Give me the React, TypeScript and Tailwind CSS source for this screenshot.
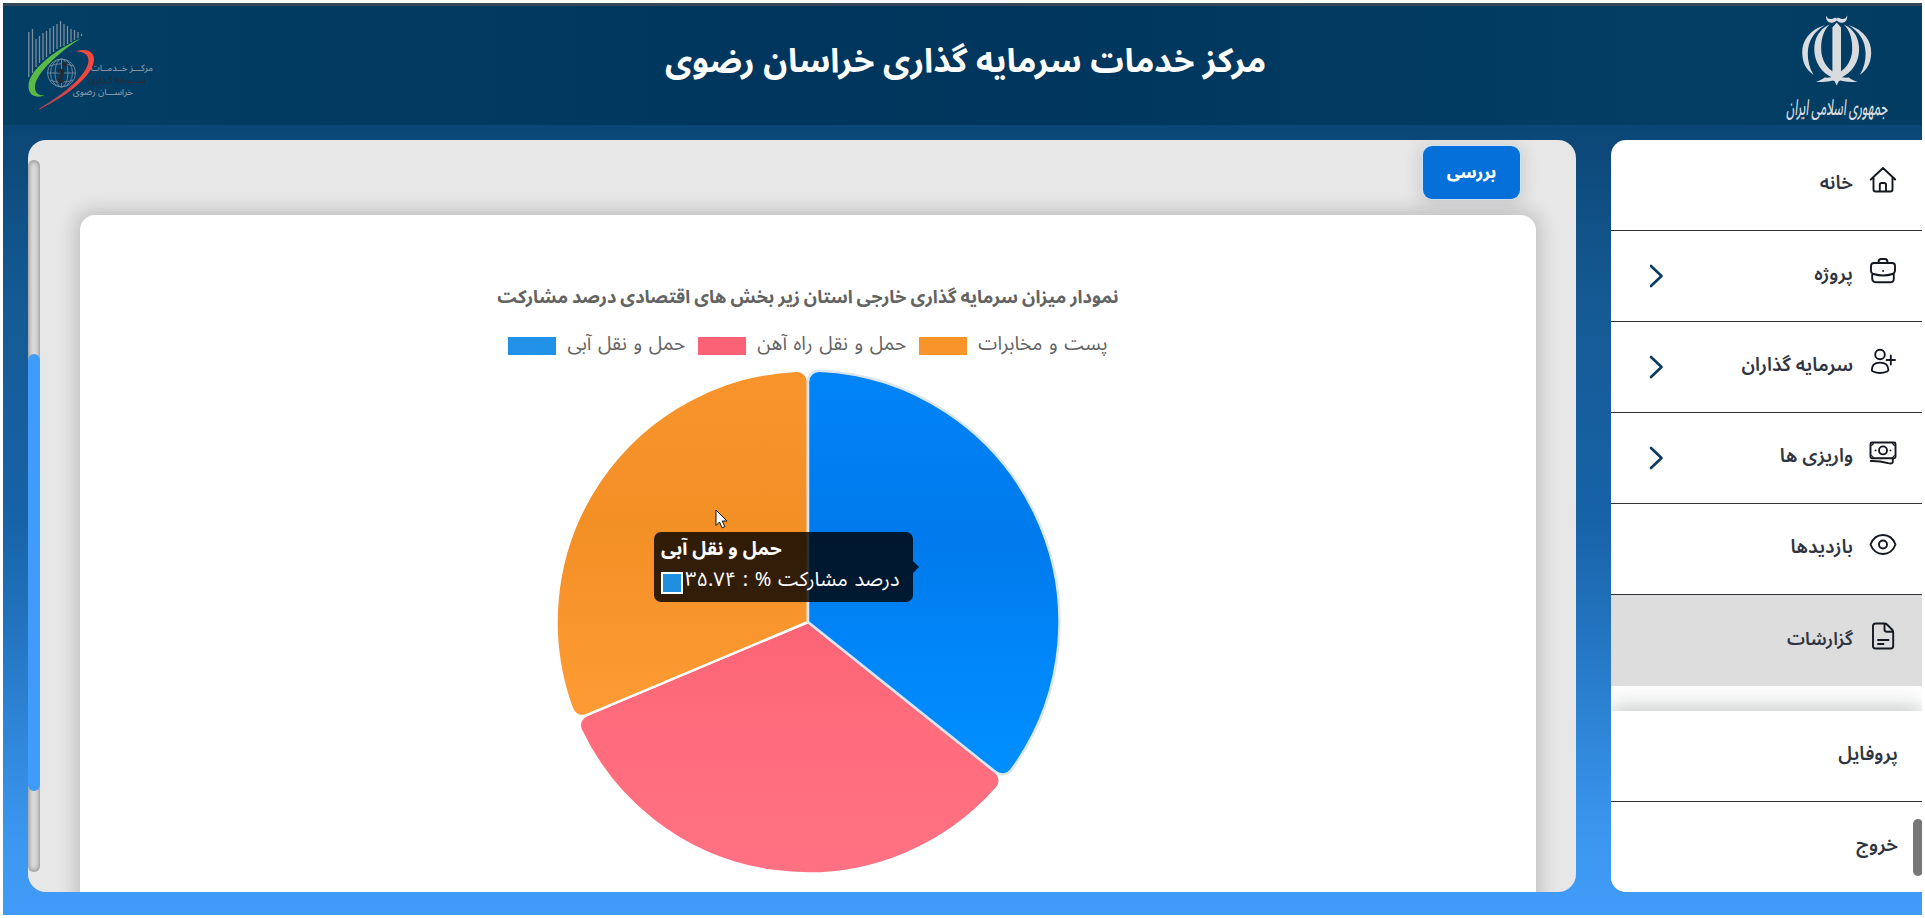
import type { ReactNode } from "react";

const CX = 260;
const CY = 260;
const R = 251.5;
const CORNER = 11;

function polar(r: number, deg: number): [number, number] {
  const a = (deg * Math.PI) / 180;
  return [CX + r * Math.sin(a), CY - r * Math.cos(a)];
}

/** Pie slice with rounded outer corners; angles run clockwise from the top. */
function slicePath(start: number, end: number) {
  const inset = (Math.asin(CORNER / (R - CORNER)) * 180) / Math.PI;
  const side = Math.sqrt((R - CORNER) ** 2 - CORNER ** 2);
  const p = (pt: [number, number]) => pt.map((n) => n.toFixed(2)).join(" ");
  return [
    `M${CX} ${CY}`,
    `L${p(polar(side, start))}`,
    `A${CORNER} ${CORNER} 0 0 1 ${p(polar(R, start + inset))}`,
    `A${R} ${R} 0 ${end - start - 2 * inset > 180 ? 1 : 0} 1 ${p(polar(R, end - inset))}`,
    `A${CORNER} ${CORNER} 0 0 1 ${p(polar(side, end))}`,
    "Z",
  ].join(" ");
}

function PieChart() {
  return (
    <svg width="520" height="520" viewBox="0 0 520 520" className="block">
      <defs>
        <linearGradient id="pieBlue" x1="0" y1="0" x2="0" y2="1">
          <stop offset="0" stopColor="#0084f8" />
          <stop offset="0.42" stopColor="#007aec" />
          <stop offset="0.75" stopColor="#0088fb" />
          <stop offset="1" stopColor="#008fff" />
        </linearGradient>
        <linearGradient id="pieOrange" x1="0" y1="0" x2="0" y2="1">
          <stop offset="0" stopColor="#f9942d" />
          <stop offset="0.45" stopColor="#f28f25" />
          <stop offset="1" stopColor="#ff9b34" />
        </linearGradient>
        <linearGradient id="piePink" x1="0" y1="0" x2="0" y2="1">
          <stop offset="0" stopColor="#fb6474" />
          <stop offset="0.4" stopColor="#ff6c7c" />
          <stop offset="1" stopColor="#ff7183" />
        </linearGradient>
      </defs>
      <path d={slicePath(128.66, 247.2)} fill="url(#piePink)" stroke="#fff" strokeWidth="2.500" />
      <path d={slicePath(247.2, 360)} fill="url(#pieOrange)" stroke="#fff" strokeWidth="2.500" />
      <path d={slicePath(0, 128.66)} fill="url(#pieBlue)" stroke="#dde6ee" strokeWidth="2.500" />
    </svg>
  );
}

function Emblem() {
  return (
    <svg width="72" height="71" viewBox="0 0 72 71" fill="#d9dcdf" className="block">
      <path d="M25 0.5C26 3.5 28.5 4.6 31.5 3.8C33.5 3.2 34.6 2 35.6 3.8C36.6 2 38 3.2 40 3.8C43 4.6 45 3.5 46.2 0.5C46.6 4.6 44.5 7.6 41 7.8C38.6 7.9 36.8 6.8 35.7 5.6C34.5 6.8 32.7 7.9 30.4 7.8C26.8 7.6 24.6 4.6 25 0.5Z" />
      <path d="M35.7 7.4L40 12.6L40 56C40 60 38.6 62.5 40.6 64.2L37.6 66.4L35.7 70.4L33.8 66.4L30.8 64.2C32.8 62.5 31.4 60 31.4 56L31.4 12.6Z" />
      <path d="M24 10C8 15 1 26 1.2 38C1.4 48.500 6 55.500 12.500 59.800C8.500 53 6.600 46 6.800 38C7.100 26 12.500 17 24 10Z" />
      <path d="M47.400 10C63.400 15 70.400 26 70.200 38C70 48.500 65.400 55.500 58.900 59.800C62.900 53 64.800 46 64.600 38C64.300 26 58.900 17 47.400 10Z" />
      <path d="M28.500 9.500C18 14 13 24 13.300 35C13.700 48 20.500 57.500 32 63L34 58C25.500 53 20.600 45 20.200 35C19.900 25 22 16 28.500 9.500Z" />
      <path d="M42.900 9.500C53.400 14 58.400 24 58.100 35C57.700 48 50.900 57.500 39.400 63L37.400 58C45.900 53 50.800 45 51.200 35C51.500 25 49.400 16 42.900 9.500Z" />
      <path d="M15 66.500C20 65.800 22 63.600 23.500 62.600C27.500 63 31 62.400 33 60.500L38.400 60.500C40.400 62.400 43.900 63 47.900 62.600C49.400 63.600 51.400 65.800 56.400 66.500C50 67.600 43.500 66.800 39.500 65.600L31.900 65.600C27.900 66.800 21.400 67.600 15 66.500Z" />
    </svg>
  );
}

const BARS: [number, number, number][] = [
  [0.8, 12, 57], [4.5, 9, 53], [8, 19, 47], [11.500, 16, 43], [15, 13, 40], [18.500, 11, 37], [22, 8, 34], [25.500, 6, 32],
  [29, 4, 29], [32.500, 1, 27], [36, 4, 26], [39.500, 6, 24], [43, 9, 22], [46.500, 10, 20], [50, 12, 18], [53.500, 14, 16],
];

function CenterLogo() {
  return (
    <svg width="72" height="92" viewBox="0 0 72 92" fill="none" className="block shrink-0">
      {BARS.map(([x, a, b]) => (
        <path key={x} d={`M${x} ${a}V${b}`} stroke="#7d8e9c" strokeWidth="1.300" />
      ))}
      <g stroke="#7189a0" strokeWidth="0.9">
        <circle cx="33.500" cy="53" r="14" />
        <ellipse cx="33.500" cy="53" rx="6.500" ry="14" />
        <ellipse cx="33.500" cy="53" rx="11" ry="14" />
        <path d="M33.500 39V67M19.500 53H47.500M21.500 46Q33.500 41.500 45.500 46M21.500 60Q33.500 64.500 45.500 60" />
      </g>
      <path d="M29.500 51.500C33 49.800 35 50.500 34.200 53L31.800 60C31.500 61.800 33 61.800 35 60.500" stroke="#252a33" strokeWidth="3.600" />
      <circle cx="36.500" cy="44.500" r="2.600" fill="#252a33" />
      <path d="M53.500 18C27 30 0 50 0.500 67C0.800 75.500 8 78.500 17 75.500C10.500 75.800 6.500 72.500 7 66.500C8 53 31 32 53.500 18Z" fill="#5ab947" />
      <path d="M47.500 31.500C56 28.500 66 30 66 39.500C65.500 55 41 75 11.500 89C38 73.500 59.500 54 60.500 41C60.800 33.500 54.500 31.500 47.500 31.500Z" fill="#f4483f" />
      <path d="M11.500 89C25 81 37 73 45.500 64.500" stroke="#b14652" strokeWidth="1.200" />
    </svg>
  );
}

function Icon({ children }: { children: ReactNode }) {
  return (
    <svg
      width="28" height="28" viewBox="0 0 28 28" fill="none" stroke="#141821" strokeWidth="1.900"
      strokeLinecap="round" strokeLinejoin="round" className="block shrink-0"
    >
      {children}
    </svg>
  );
}

const icons = {
  home: (
    <Icon>
      <path d="M1.800 13.500L14 2L26.200 13.500M4.500 11.500V23.500Q4.500 25.500 6.500 25.500H21.500Q23.500 25.500 23.500 23.500V11.500M10.800 25V18.800Q10.800 17 12.600 17H15.200Q17 17 17 18.800V25" />
    </Icon>
  ),
  briefcase: (
    <Icon>
      <path d="M5 6H23Q26 6.200 26 9V14Q25.500 16.500 23.500 17Q14 20 4.500 17Q2.300 16.500 2 14V9Q2 6.200 5 6ZM3.200 17.500V22Q3.500 25.300 7 25.300H21Q24.700 25.300 24.800 22V17.500M9.500 5.500Q9.500 2 12 2H16Q18.500 2 18.500 5.500" />
      <circle cx="14" cy="14" r="0.500" strokeWidth="1" />
    </Icon>
  ),
  userPlus: (
    <Icon>
      <circle cx="11" cy="6.500" r="4.800" />
      <path d="M2.800 22Q2.800 14.600 11 14.600T19.400 22Q19.300 23 18 23.500Q11 26.500 4 23.500Q2.800 23 2.800 22ZM21.800 7.500V16.500M17.600 12H26" />
    </Icon>
  ),
  money: (
    <Icon>
      <rect x="1.500" y="3.500" width="25" height="15.800" rx="1.500" />
      <circle cx="14" cy="11.400" r="4" />
      <path d="M2 6.500Q4 6 4.500 4M26 6.500Q24 6 23.500 4M2 16.500Q4 17 4.500 19M26 16.500Q24 17 23.500 19" strokeWidth="1.100" />
      <path d="M6.500 11.400H6.600M21.400 11.400H21.500M1.800 22Q11 21.800 19 24.200Q23.600 25.300 23.800 23V20" />
    </Icon>
  ),
  eye: (
    <Icon>
      <path d="M1.500 14.500C4 8 8.500 5 14 5S24 8 26.500 14.500C24 21 19.500 24 14 24S4 21 1.500 14.500Z" />
      <circle cx="14" cy="14.500" r="4" />
    </Icon>
  ),
  report: (
    <Icon>
      <path d="M6.500 1.500H15.500Q17 1.500 18 2.500L23.500 8Q24.200 9 24.200 10.500V24Q24.200 26.500 21.800 26.500H6.500Q4 26.500 4 24V4Q4 1.500 6.500 1.500ZM15.500 2V7.500Q15.500 9.700 17.700 9.700H23.500M9 18H19.500M9 22H14.500" />
    </Icon>
  ),
};

interface Item {
  label: string;
  icon: ReactNode;
  sub?: boolean;
  active?: boolean;
}

const items: Item[] = [
  { label: "خانه", icon: icons.home },
  { label: "پروژه", icon: icons.briefcase, sub: true },
  { label: "سرمایه گذاران", icon: icons.userPlus, sub: true },
  { label: "واریزی ها", icon: icons.money, sub: true },
  { label: "بازدیدها", icon: icons.eye },
  { label: "گزارشات", icon: icons.report, active: true },
];

function Sidebar() {
  return (
    <aside className="relative flex h-[752px] w-[311px] shrink-0 flex-col overflow-hidden rounded-l-[15px] bg-white text-[19px] font-semibold text-[#2f3540]">
      {items.map((it) => (
        <div
          key={it.label}
          className={
            it.active
              ? "flex h-[91px] shrink-0 items-center bg-[#dddddd] pr-[25px] pl-[37px] text-[18px]"
              : "flex h-[91px] shrink-0 items-center border-b border-[#2f3338] pr-[25px] pl-[37px]"
          }
        >
          <span className="-mt-[10px]">{it.icon}</span>
          <span className="-mt-[3px] mr-[16px] whitespace-nowrap">{it.label}</span>
          {it.sub && (
            <svg width="16" height="24" viewBox="0 0 16 24" fill="none" className="mr-auto block" stroke="#0b3a60" strokeWidth="2.600" strokeLinecap="round" strokeLinejoin="round">
              <path d="M3 2L13.500 12L3 22" />
            </svg>
          )}
        </div>
      ))}
      <div className="mt-auto flex shrink-0 flex-col bg-white shadow-[0_-2px_22px_rgba(20,40,35,0.3)]">
        <div className="flex h-[91px] items-center border-b border-[#2f3338] pr-[24px] pb-[3px]">پروفایل</div>
        <div className="flex h-[90px] items-center pr-[24px] pb-[3px]">خروج</div>
      </div>
      <div className="absolute top-[679px] -right-[1px] h-[57px] w-[10px] rounded-full bg-[#777777]" />
    </aside>
  );
}

const legend = [
  { label: "پست و مخابرات", box: "bg-[#f9942b]" },
  { label: "حمل و نقل راه آهن", box: "bg-[#fc6275]" },
  { label: "حمل و نقل آبی", box: "bg-[#2292e8]" },
];

function Tooltip() {
  return (
    <div className="absolute top-[317px] left-[574px] h-[70px] w-[259px] rounded-[7px] bg-black/80 px-[7px] py-[3px] text-white">
      <div className="flex h-[28px] items-center justify-end text-[19px] font-bold whitespace-nowrap">حمل و نقل آبی</div>
      <div className="flex h-[34px] items-center justify-end text-[20px] whitespace-nowrap [word-spacing:1.4px]">
        <span>درصد مشارکت % : ۳۵.۷۴</span>
        <span className="mt-[6px] mr-[2px] block size-[22px] border-2 border-white bg-[#1f8fe0]" />
      </div>
      <svg width="6" height="12" viewBox="0 0 6 12" className="absolute top-[29px] -right-[6px] block">
        <path d="M0 0L6 6L0 12Z" fill="#001b30" />
      </svg>
    </div>
  );
}

export default function App() {
  return (
    <div dir="rtl" className="h-[918px] w-[1925px] overflow-hidden bg-white p-[3px] font-['Noto_Sans_Arabic','Vazirmatn',sans-serif]">
      <div className="flex h-[912px] w-full flex-col bg-[linear-gradient(180deg,#0b4472_0%,#0b4776_14%,#155a94_33%,#1763a8_57%,#2070ba_66%,#2f86d8_80%,#3c97f0_92%,#409cf8_100%)]">
        <header className="flex h-[122px] shrink-0 items-start justify-between border-t-[3px] border-[#34475a] bg-[linear-gradient(90deg,#033e65_0%,#00355c_48%,#033e65_88%,#023c62_100%)]">
          <div className="flex w-[170px] flex-col items-center pt-[9px]">
            <Emblem />
            <div className="mt-[8px] ml-[2px] h-[30px] -skew-x-12 scale-y-[1.900] text-[11.500px] leading-[28px] font-medium whitespace-nowrap text-[#d9dcdf]">جمهوری اسلامی ایران</div>
          </div>
          <h1 className="pt-[30px] text-[33.3px] leading-[52px] font-bold whitespace-nowrap text-white">مرکز خدمات سرمایه گذاری خراسان رضوی</h1>
          <div dir="ltr" className="flex w-[176px] pt-[14px] pl-[25px]">
            <CenterLogo />
            <div dir="rtl" className="mt-[43px] -ml-[5px] flex w-[60px] flex-col text-[9px] leading-[12px] font-medium whitespace-nowrap text-[#8795a3]">
              <span className="mr-[2px]">مرکـــز خــدمــات</span>
              <span className="mr-[9px] text-[#262c36]">ســرمایه گـذاری</span>
              <span className="mr-[22px]">خراســـان رضوی</span>
            </div>
          </div>
        </header>

        <div className="flex justify-between pt-[15px] pl-[25px]">
          <Sidebar />
          <main className="relative h-[752px] w-[1548px] overflow-hidden rounded-[18px] bg-[#e7e7e7]">
            <div className="flex h-[75px] pt-[6px] pr-[56px]">
              <button className="flex h-[53px] w-[97px] items-center justify-center rounded-[9px] bg-[#0670da] pt-[2px] text-[16.500px] font-extrabold text-white shadow-[0_0_0_1px_#cfe6fa,0_2px_16px_3px_rgba(60,60,80,0.16)]">
                بررسی
              </button>
            </div>
            <section className="relative mr-[40px] h-[760px] w-[1456px] rounded-[15px] bg-white shadow-[0_0_18px_5px_rgba(0,0,0,0.17)]">
              <div className="flex flex-col items-center pt-[64px]">
                <h2 className="h-[36px] text-[18.200px] leading-[36px] font-bold whitespace-nowrap text-[#636363] [word-spacing:-0.8px]">
                  نمودار میزان سرمایه گذاری خارجی استان زیر بخش های اقتصادی درصد مشارکت
                </h2>
                <ul className="mt-[12px] flex h-[35px] items-center gap-[13px] text-[19.300px] whitespace-nowrap text-[#636363] [word-spacing:1.6px]">
                  {legend.map((l) => (
                    <li key={l.label} className="flex items-center gap-[11px]">
                      <span className="-mt-[1px]">{l.label}</span>
                      <span className={`mt-[3px] block h-[18px] w-[48px] ${l.box}`} />
                    </li>
                  ))}
                </ul>
                <PieChart />
              </div>
              <Tooltip />
              <svg width="13" height="20" viewBox="0 0 13 20" className="absolute top-[294px] left-[635px] block">
                <path d="M1 1V16.500L4.500 13L7.200 18.800L9.800 17.600L7.200 12H12Z" fill="#fff" stroke="#111" strokeWidth="1" />
              </svg>
            </section>
            <div className="absolute top-[20px] left-0 h-[712px] w-[12px] rounded-full bg-[#d9d9d9] shadow-[inset_0_0_4px_1px_rgba(0,0,0,0.35)]">
              <div className="mt-[194px] h-[437px] rounded-full bg-[#409cfa]" />
            </div>
          </main>
        </div>
      </div>
    </div>
  );
}
